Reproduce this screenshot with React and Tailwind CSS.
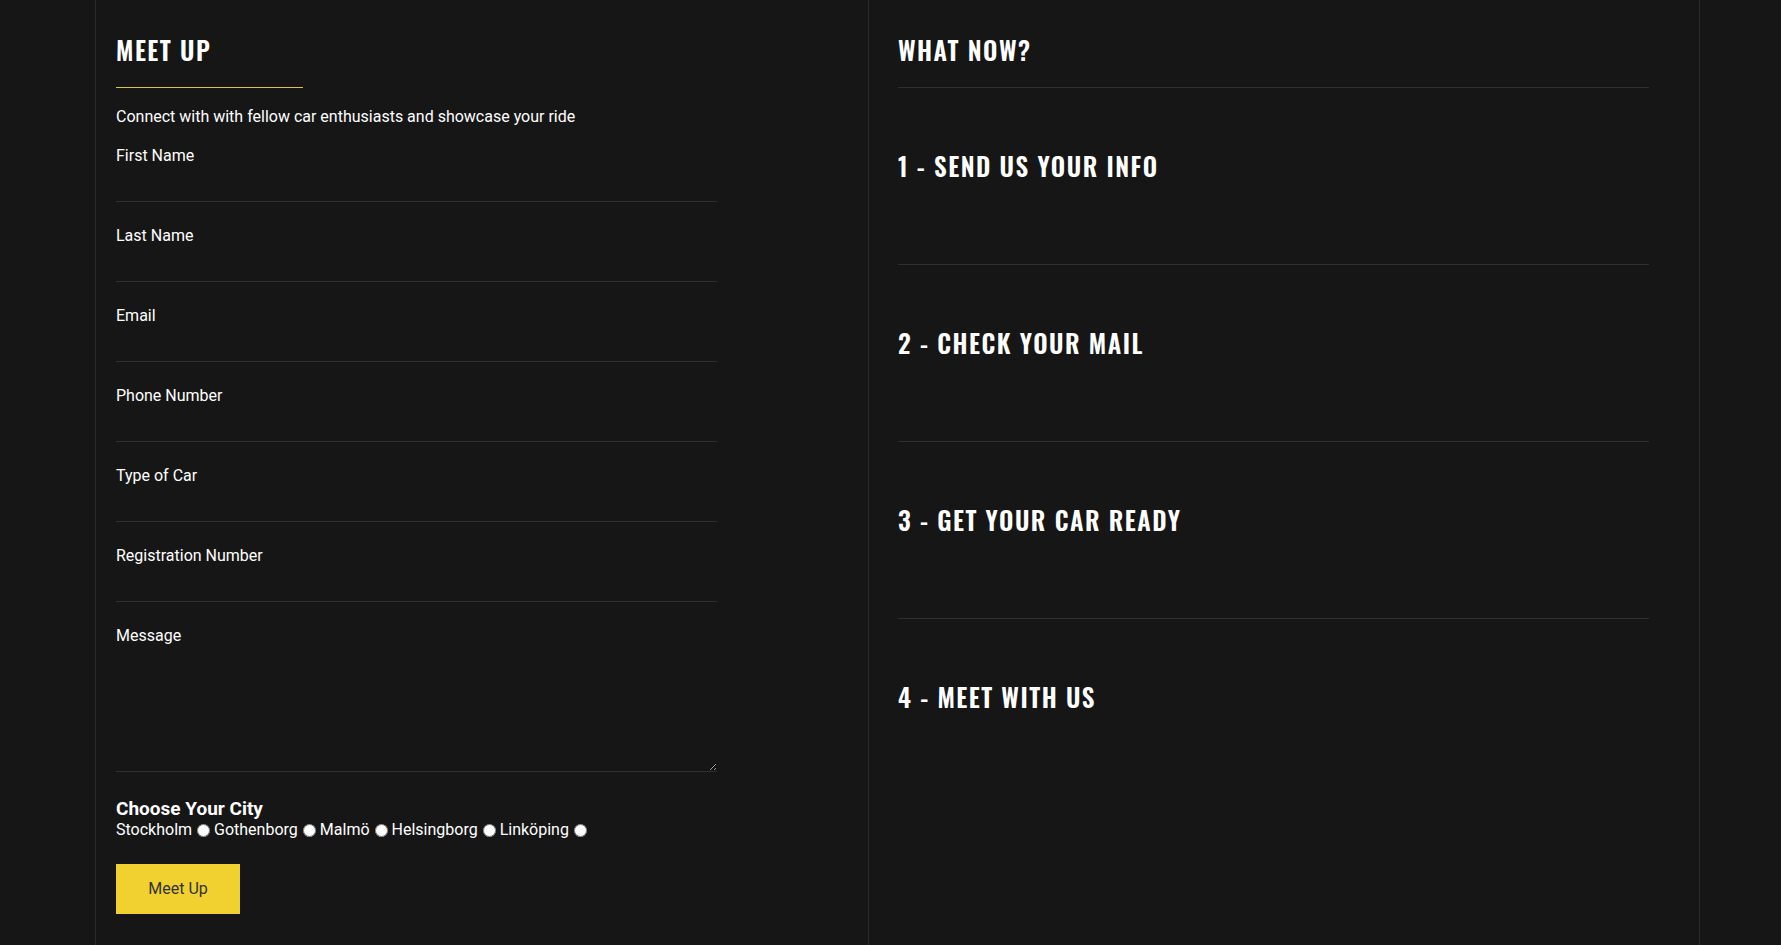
const fields = [
  "First Name",
  "Last Name",
  "Email",
  "Phone Number",
  "Type of Car",
  "Registration Number",
];

const cities = ["Stockholm", "Gothenborg", "Malmö", "Helsingborg", "Linköping"];

const steps = [
  "1 - Send us your info",
  "2 - Check your mail",
  "3 - Get your car ready",
  "4 - Meet with us",
];

const headingFont =
  "font-['Oswald','Roboto_Condensed','Liberation_Sans_Narrow','DejaVu_Sans_Condensed',sans-serif]";

const App = () => {
  return (
    <div className="min-h-screen bg-[#161616] text-white font-['Roboto','Liberation_Sans',sans-serif]">
      <div className="ml-[95px] w-[1605px] h-[945px] flex border-x border-[#2b2b2b]">
        {/* left: form */}
        <section className="w-[772px] px-[20px]">
          <div className="w-[601px]">
            <div className="h-[87px] pt-[35px]">
              <h2
                className={`${headingFont} text-[25px] leading-[30px] font-semibold uppercase tracking-[1.5px]`}
              >
                Meet Up
              </h2>
            </div>
            <div className="w-[187px] h-px bg-[#e2c23a]"></div>
            <p className="mt-[17px] text-[16px] leading-[24px]">
              Connect with with fellow car enthusiasts and showcase your ride
            </p>

            <form className="mt-[15px]" onSubmit={(e) => e.preventDefault()}>
              {fields.map((label) => (
                <div key={label} className="mb-[22px]">
                  <label className="block text-[16px] leading-[24px]">
                    {label}
                  </label>
                  <input
                    type="text"
                    className="block w-full h-[34px] bg-transparent border-0 border-b border-[#2f2f2f] text-white outline-none"
                  />
                </div>
              ))}

              <div>
                <label className="block text-[16px] leading-[24px]">
                  Message
                </label>
                <textarea className="block w-full h-[124px] bg-transparent border-0 border-b border-[#2f2f2f] text-white outline-none"></textarea>
              </div>

              <h3 className="mt-[26px] text-[19px] leading-[22px] font-bold">
                Choose Your City
              </h3>
              <div className="flex items-center text-[16px] leading-[20px]">
                {cities.map((c) => (
                  <label key={c} className="flex items-center">
                    {c}
                    <input
                      type="radio"
                      name="city"
                      className="w-[13px] h-[13px] ml-[5px] mr-[4px]"
                    />
                  </label>
                ))}
              </div>

              <button
                type="submit"
                className="mt-[24px] w-[124px] h-[50px] bg-[#f1d12f] text-[#333333] text-[16px]"
              >
                Meet Up
              </button>
            </form>
          </div>
        </section>

        {/* right: steps */}
        <section className="flex-1 border-l border-[#2b2b2b] pl-[29px] pr-[50px]">
          <div className="h-[87px] pt-[35px]">
            <h2
              className={`${headingFont} text-[25px] leading-[30px] font-semibold uppercase tracking-[1.5px]`}
            >
              What Now?
            </h2>
          </div>
          <div className="w-full h-px bg-[#2f2f2f]"></div>
          {steps.map((s, i) => (
            <div
              key={s}
              className={`h-[177px] pt-[63px] ${i < steps.length - 1 ? "border-b border-[#2f2f2f]" : ""}`}
            >
              <h3
                className={`${headingFont} text-[25px] leading-[30px] font-semibold uppercase tracking-[1.5px]`}
              >
                {s}
              </h3>
            </div>
          ))}
        </section>
      </div>
    </div>
  );
};

export default App;
